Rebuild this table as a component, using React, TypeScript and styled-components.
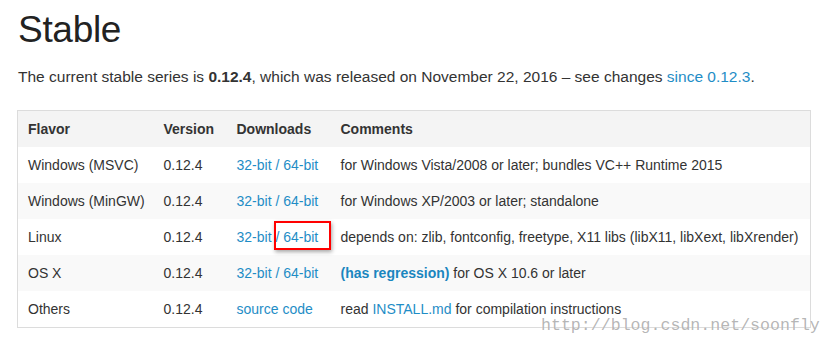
import React from 'react';
import styled, { createGlobalStyle, css } from 'styled-components';

const GlobalStyle = createGlobalStyle`
  html, body {
    margin: 0;
    padding: 0;
    background: #fff;
  }

  body {
    font-family: "Liberation Sans", Arial, sans-serif;
    color: #333;
  }
`;

const Page = styled.div`
  position: relative;
  width: 833px;
  height: 346px;
  padding: 0 22px 0 17px;
  box-sizing: border-box;
  overflow: hidden;
`;

const Title = styled.h1`
  margin: 10px 0 0 1px;
  font-size: 37px;
  line-height: 40px;
  font-weight: 400;
  letter-spacing: -0.3px;
  color: #222;
`;

const Lead = styled.p`
  margin: 17px 0 0 1px;
  font-size: 15.5px;
  line-height: 20px;
  color: #333;
`;

const Link = styled.a`
  color: #1f8dc6;
  text-decoration: none;
`;

const StrongLink = styled(Link)`
  font-weight: 700;
  color: #1a86bf;
`;

const Table = styled.table`
  margin-top: 23px;
  width: 794px;
  border: 1px solid #dcdcdc;
  border-collapse: collapse;
  table-layout: fixed;
  font-size: 14px;
  line-height: 20px;
`;

const Head = styled.th`
  background: #f4f4f4;
  text-align: left;
  font-weight: 700;
  padding: 8px 10px;
  color: #333;
`;

const Row = styled.tr<{ $striped?: boolean }>`
  ${(p) => p.$striped && css`
    background: #f9f9f9;
  `}
`;

const Cell = styled.td`
  padding: 8px 10px;
  white-space: nowrap;
  color: #333;
`;

const Marked = styled.span`
  position: relative;
  color: #1f8dc6;

  &::after {
    content: "";
    position: absolute;
    left: -1px;
    right: -13px;
    top: -8px;
    bottom: -5px;
    border: 2px solid #f00;
    box-shadow: 1px 2px 4px rgba(0, 0, 0, 0.35);
  }
`;

const Slash = styled.span`
  color: #1f8dc6;
`;

const Watermark = styled.div`
  position: absolute;
  left: 541px;
  top: 315px;
  font-family: "Liberation Mono", "Courier New", monospace;
  font-size: 16.6px;
  line-height: 22px;
  color: rgba(150, 150, 150, 0.7);
  text-shadow: 0 0 1px rgba(255, 255, 255, 0.9);
  white-space: nowrap;
`;

interface Release {
  flavor: string;
  downloads: React.ReactNode;
  comments: React.ReactNode;
}

const bits = (marked = false) => (
  <>
    <Link href="#">32-bit</Link>{' '}
    {marked ? (
      <Marked>/ <Link href="#">64-bit</Link></Marked>
    ) : (
      <>
        <Slash>/</Slash> <Link href="#">64-bit</Link>
      </>
    )}
  </>
);

const releases: Release[] = [
  {
    flavor: 'Windows (MSVC)',
    downloads: bits(),
    comments: 'for Windows Vista/2008 or later; bundles VC++ Runtime 2015',
  },
  {
    flavor: 'Windows (MinGW)',
    downloads: bits(),
    comments: 'for Windows XP/2003 or later; standalone',
  },
  {
    flavor: 'Linux',
    downloads: bits(true),
    comments: 'depends on: zlib, fontconfig, freetype, X11 libs (libX11, libXext, libXrender)',
  },
  {
    flavor: 'OS X',
    downloads: bits(),
    comments: (
      <>
        <StrongLink href="#">(has regression)</StrongLink> for OS X 10.6 or later
      </>
    ),
  },
  {
    flavor: 'Others',
    downloads: <Link href="#">source code</Link>,
    comments: (
      <>
        read <Link href="#">INSTALL.md</Link> for compilation instructions
      </>
    ),
  },
];

export default function App() {
  return (
    <Page>
      <GlobalStyle />
      <Title>Stable</Title>
      <Lead>
        The current stable series is <b>0.12.4</b>, which was released on November 22, 2016 – see
        changes <Link href="#">since 0.12.3</Link>.
      </Lead>
      <Table>
        <colgroup>
          <col style={{ width: 136 }} />
          <col style={{ width: 73 }} />
          <col style={{ width: 104 }} />
          <col />
        </colgroup>
        <thead>
          <tr>
            <Head>Flavor</Head>
            <Head>Version</Head>
            <Head>Downloads</Head>
            <Head>Comments</Head>
          </tr>
        </thead>
        <tbody>
          {releases.map((r, i) => (
            <Row key={r.flavor} $striped={i % 2 === 1}>
              <Cell>{r.flavor}</Cell>
              <Cell>0.12.4</Cell>
              <Cell>{r.downloads}</Cell>
              <Cell>{r.comments}</Cell>
            </Row>
          ))}
        </tbody>
      </Table>
      <Watermark>http://blog.csdn.net/soonfly</Watermark>
    </Page>
  );
}
